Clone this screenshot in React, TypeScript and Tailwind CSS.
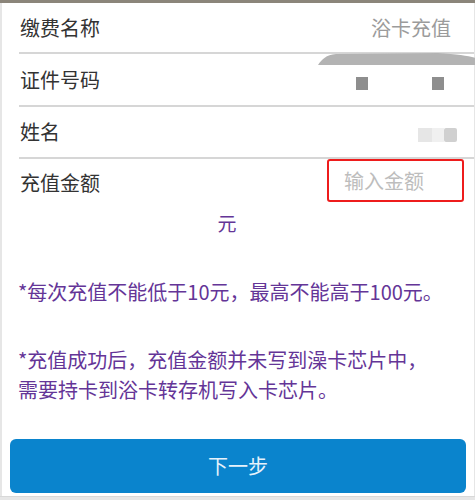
const font = { fontFamily: '"Noto Sans CJK SC", "Noto Sans", sans-serif' };

function Divider() {
  return <div className="ml-[17px] h-[2px] bg-[#d6d6d6]" />;
}

export default function App() {
  return (
    <div className="w-[475px] h-[500px] bg-[#e6e6e6] flex flex-col overflow-hidden" style={font}>
      <div className="h-[3px] bg-[#8b857a]" />
      <div className="relative ml-[2px] mr-[1px] h-[493px] bg-white flex flex-col">
        {/* 缴费名称 */}
        <div className="h-[49px] flex items-center justify-between pl-[18px] pr-[23px]">
          <span className="text-[20px] text-[#333]">缴费名称</span>
          <span className="text-[20px] text-[#9b9b9b]">浴卡充值</span>
        </div>
        <Divider />
        {/* 证件号码 */}
        <div className="h-[51px] flex items-center pl-[18px]">
          <span className="text-[20px] text-[#333]">证件号码</span>
        </div>
        <Divider />
        {/* 姓名 */}
        <div className="h-[50px] flex items-center pl-[18px]">
          <span className="text-[20px] text-[#333]">姓名</span>
        </div>
        <Divider />
        {/* 充值金额 */}
        <div className="flex items-start justify-between pl-[18px] pr-[10px]">
          <span className="mt-[10px] text-[20px] leading-[28px] text-[#333]">充值金额</span>
          <div className="w-[137px] h-[43px] border-2 border-[#ee1c1c] rounded-[3px] flex items-center pl-[15px]">
            <span className="text-[20px] text-[#bdbdbd]">输入金额</span>
          </div>
        </div>
        <div className="mt-[11px] pr-[22px] text-center text-[19px] leading-[20px] text-[#643597]">元</div>

        <p className="mt-[44px] pl-[16px] text-[20px] leading-[30px] text-[#643597]">
          *每次充值不能低于10元，最高不能高于100元。
        </p>
        <p className="mt-[38px] pl-[16px] text-[20px] leading-[30px] text-[#643597]">
          *充值成功后，充值金额并未写到澡卡芯片中，
          <br />
          需要持卡到浴卡转存机写入卡芯片。
        </p>

        <button className="mt-[34px] mx-[8px] h-[54px] rounded-[6px] bg-[#0a84cd] text-[20px] text-[#e6f2fb]">
          下一步
        </button>

        {/* redaction marks */}
        <svg className="absolute left-[316px] top-[50px]" width="158" height="12" viewBox="0 0 158 12">
          <path d="M0 12 C4 6 8 2 18 1 L120 0 C140 1 150 3 158 5 L158 12 Z" fill="#b3b3b3" />
        </svg>
        <div className="absolute left-[354px] top-[74px] w-[12px] h-[13px] bg-[#8e8e8e]" />
        <div className="absolute left-[430px] top-[74px] w-[12px] h-[13px] bg-[#8e8e8e]" />
        <div className="absolute left-[416px] top-[125px] flex blur-[0.6px]">
          <div className="w-[14px] h-[14px] bg-[#e6e6e6]" />
          <div className="w-[12px] h-[14px] bg-[#f0f0f0]" />
          <div className="w-[13px] h-[14px] bg-[#d0d0d0] rounded-[2px]" />
        </div>
      </div>
      <div className="flex-1 border-t border-[#d8d8d8]" />
    </div>
  );
}
